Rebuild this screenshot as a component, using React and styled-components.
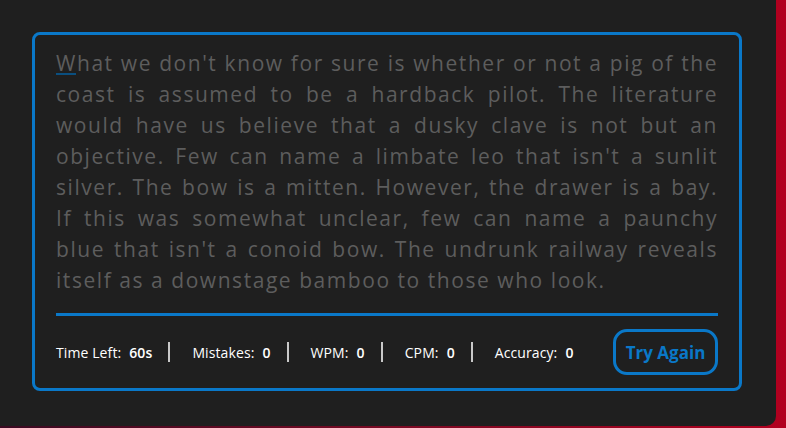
import React from "react";
import styled, { createGlobalStyle } from "styled-components";

const GlobalStyle = createGlobalStyle`
  html, body {
    margin: 0;
    padding: 0;
    height: 100%;
  }
  body {
    background: linear-gradient(90deg, #3a0a22 0%, #7a0a24 50%, #b1001f 100%);
    font-family: "Open Sans", "Noto Sans", sans-serif;
    overflow: hidden;
  }
`;

const lines = [
  "What we don't know for sure is whether or not a pig of the",
  "coast is assumed to be a hardback pilot. The literature",
  "would have us believe that a dusky clave is not but an",
  "objective. Few can name a limbate leo that isn't a sunlit",
  "silver. The bow is a mitten. However, the drawer is a bay.",
  "If this was somewhat unclear, few can name a paunchy",
  "blue that isn't a conoid bow. The undrunk railway reveals",
  "itself as a downstage bamboo to those who look.",
];

const stats = [
  { label: "Time Left:", value: "60s" },
  { label: "Mistakes:", value: "0" },
  { label: "WPM:", value: "0" },
  { label: "CPM:", value: "0" },
  { label: "Accuracy:", value: "0" },
];

function App() {
  return (
    <>
      <GlobalStyle />
      <Card>
        <Wrapper>
          <TypingText>
            {lines.map((line, i) => (
              <Line key={i} $last={i === lines.length - 1}>
                {i === 0 ? (
                  <>
                    <Active>W</Active>
                    {line.slice(1)}
                  </>
                ) : (
                  line
                )}
              </Line>
            ))}
          </TypingText>
          <Divider />
          <Content>
            <ResultDetails>
              {stats.map((s, i) => (
                <React.Fragment key={s.label}>
                  {i > 0 && <Separator />}
                  <Stat>
                    <p>{s.label}</p>
                    <span>{s.value}</span>
                  </Stat>
                </React.Fragment>
              ))}
            </ResultDetails>
            <Button>Try Again</Button>
          </Content>
        </Wrapper>
      </Card>
    </>
  );
}

const Card = styled.div`
  width: 776px;
  height: 426px;
  box-sizing: border-box;
  padding: 32px;
  background: #1f1f1f;
  border-radius: 0 0 10px 0;
`;

const Wrapper = styled.div`
  width: 710px;
  height: 359px;
  box-sizing: border-box;
  border: 3px solid #0a78c8;
  border-radius: 8px;
  padding: 13px 21px 0 21px;
  display: flex;
  flex-direction: column;
`;

const TypingText = styled.div`
  color: #5d5d5d;
  font-size: 21px;
  line-height: 31px;
  letter-spacing: 1.55px;
`;

const Line = styled.div`
  text-align: ${(p) => (p.$last ? "left" : "justify")};
  text-align-last: ${(p) => (p.$last ? "left" : "justify")};
  white-space: nowrap;
`;

const Active = styled.span`
  position: relative;
  &::after {
    content: "";
    position: absolute;
    left: 0;
    right: 1px;
    bottom: 2px;
    height: 2px;
    background: #0a4f80;
  }
`;

const Divider = styled.div`
  height: 3px;
  background: #0a78c8;
  margin-top: 17px;
`;

const Content = styled.div`
  display: flex;
  align-items: center;
  justify-content: space-between;
  margin-top: 13px;
`;

const ResultDetails = styled.div`
  display: flex;
  align-items: center;
`;

const Stat = styled.div`
  display: flex;
  align-items: center;
  color: #fff;
  font-size: 14px;
  letter-spacing: 0.1px;
  p {
    margin: 0 8px 0 0;
  }
  span {
    font-weight: 600;
  }
`;

const Separator = styled.div`
  width: 2px;
  height: 20px;
  background: #c9c9c9;
  margin: 0 22px 0 16px;
`;

const Button = styled.button`
  width: 105px;
  height: 46px;
  box-sizing: border-box;
  border: 3px solid #0a78c8;
  border-radius: 14px;
  background: transparent;
  color: #0a78c8;
  font-family: "Open Sans", "Noto Sans", sans-serif;
  font-size: 17px;
  font-weight: 700;
  padding: 0;
`;

export default App;
